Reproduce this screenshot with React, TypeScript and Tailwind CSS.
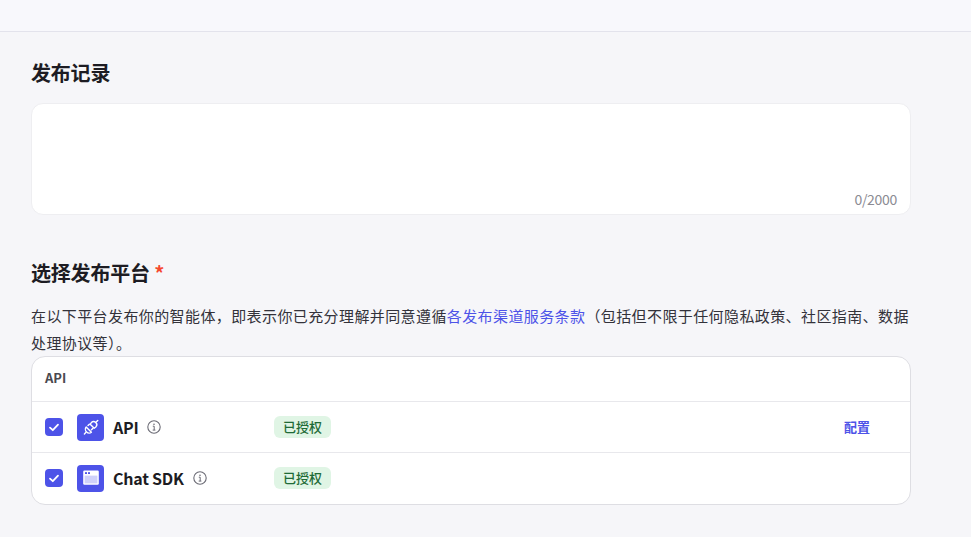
import React from "react";

const cjk = "font-['Noto_Sans_CJK_SC','Noto_Sans',sans-serif]";

function InfoIcon() {
  return (
    <svg width="14" height="14" viewBox="0 0 14 14" fill="none" className="shrink-0">
      <circle cx="7" cy="7" r="6.2" stroke="#6b6b75" strokeWidth="1.1" />
      <circle cx="7" cy="4.2" r="0.8" fill="#6b6b75" />
      <path d="M5.8 6.2H7.2V10M5.7 10.1H8.4" stroke="#6b6b75" strokeWidth="1" />
    </svg>
  );
}

function Check() {
  return (
    <div className="w-[18px] h-[18px] rounded-[4px] bg-[#4d53e8] flex items-center justify-center shrink-0">
      <svg width="12" height="12" viewBox="0 0 12 12" fill="none">
        <path d="M2 6.6L4.8 9.2L10 3.6" stroke="white" strokeWidth="1.8" strokeLinecap="round" strokeLinejoin="round" />
      </svg>
    </div>
  );
}

function PlugIcon() {
  return (
    <svg width="18" height="18" viewBox="0 0 18 18" fill="none" stroke="white" strokeWidth="1.4" strokeLinecap="round" strokeLinejoin="round">
      <path d="M9.4 4.6C10.6 3.4 12.6 3.4 13.8 4.6C15 5.8 15 7.8 13.8 9L12.2 10.2L8.2 6.2Z" />
      <path d="M4.2 9L9.4 14.2C8.2 15.4 6 15.4 4.6 14C3.2 12.6 3 10.2 4.2 9Z" />
      <path d="M3.8 14.6L2.4 16M14.4 3.8L15.8 2.4M6 7.6L7.4 6.2M9.4 11.8L10.8 10.4" />
    </svg>
  );
}

function WindowIcon() {
  return (
    <svg width="18" height="18" viewBox="0 0 18 18" fill="none">
      <rect x="1.2" y="1.6" width="15.6" height="14.2" rx="1.2" fill="white" />
      <rect x="3" y="3.2" width="2" height="1.8" fill="#4d53e8" />
      <rect x="6" y="3.2" width="2" height="1.8" fill="#4d53e8" />
      <rect x="2.6" y="6.6" width="12.8" height="7.8" fill="#cfd1fa" />
    </svg>
  );
}

function Row({ icon, name, action, last }: { icon: React.ReactNode; name: string; action?: boolean; last?: boolean }) {
  return (
    <div className={`flex items-center pl-[13px] ${last ? "h-[51px] pb-[1px]" : "h-[51px] border-b border-[#e8e8ec]"}`}>
      <Check />
      <div className="ml-[14px] w-[27px] h-[27px] rounded-[4px] bg-[#4d53e8] flex items-center justify-center shrink-0">{icon}</div>
      <div className="ml-[9px] flex items-center gap-[9px] w-[161px]">
        <span className="text-[16px] tracking-[-0.25px] font-semibold text-[#1d1c23]">{name}</span>
        <InfoIcon />
      </div>
      <span className="h-[22px] w-[57px] rounded-[6px] bg-[#e0f5e5] text-[#1f6b37] text-[13px] font-medium flex items-center justify-center shrink-0">已授权</span>
      {action && <span className="ml-[513px] text-[13px] font-semibold text-[#4d53e8]">配置</span>}
    </div>
  );
}

export default function App() {
  return (
    <div className={`${cjk} w-[971px] h-[537px] overflow-hidden bg-[#f6f6f9]`}>
      <div className="h-[32px] bg-[#f8f8fc] border-b border-[#e3e3ec]" />
      <div className="pl-[31px] w-[911px]">
        <h2 className="mt-[26px] h-[30px] leading-[30px] text-[20px] tracking-[-0.2px] font-semibold text-[#1d1c23]">发布记录</h2>
        <div className="mt-[15px] h-[112px] rounded-[12px] bg-white border border-[#eeeef1] flex items-end justify-end pr-[13px] pb-[5px]">
          <span className="text-[14px] leading-[20px] tracking-[-0.3px] text-[#8b8b93]">0/2000</span>
        </div>
        <h2 className="mt-[43px] h-[30px] leading-[30px] text-[20px] tracking-[-0.2px] font-semibold text-[#1d1c23]">
          选择发布平台 <span className="font-bold text-[#f5492f]">*</span>
        </h2>
        <p className="mt-[14px] text-[15px] leading-[27px] text-[#33323a] tracking-[0.4px]">
          在以下平台发布你的智能体，即表示你已充分理解并同意遵循<span className="text-[#4d53e8]">各发布渠道服务条款</span>（包括但不限于任何隐私政策、社区指南、数据处理协议等）。
        </p>
        <div className="h-[149px] rounded-[14px] bg-white border border-[#dedee3] overflow-hidden">
          <div className="h-[45px] pl-[13px] pb-[3px] flex items-center border-b border-[#e8e8ec] text-[13px] font-semibold text-[#4a4950]">API</div>
          <Row icon={<PlugIcon />} name="API" action />
          <Row icon={<WindowIcon />} name="Chat SDK" last />
        </div>
      </div>
    </div>
  );
}
